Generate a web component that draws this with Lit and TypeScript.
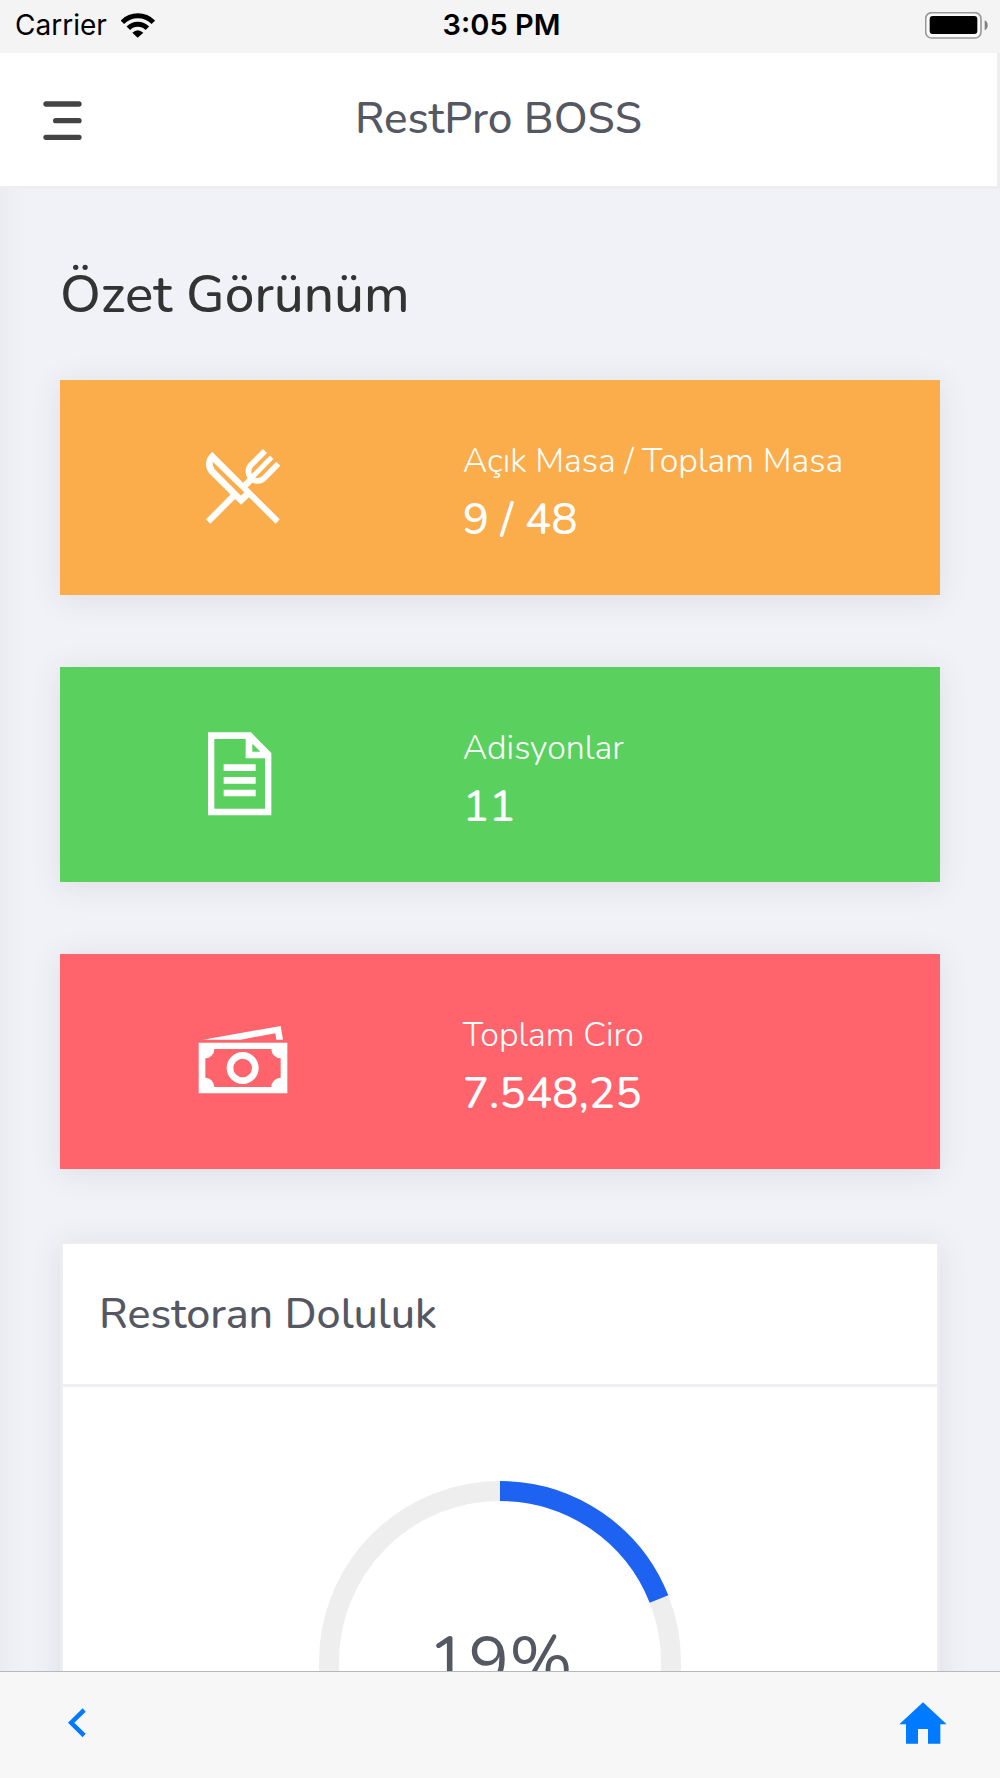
import { LitElement, html, css, svg } from "lit";
import { customElement, property } from "lit/decorators.js";

const cutleryIcon = svg`
  <svg viewBox="46 59 288 288" aria-hidden="true">
    <path fill="currentColor" fill-rule="evenodd" d="M98 95L300 297L288 310L208 231L184 253L90 160Q79 148 79 130Q80 108 98 95ZM99 124Q98 138 105 147L184 226L194 216Z"/>
    <path fill="currentColor" d="M79 297L154 221L167 235L92 310ZM190 188L212 165L226 179L203 202Z"/>
    <g fill="none" stroke="currentColor">
      <path stroke-width="17" d="M256 92L214 134Q203 146 208 163L214 175L227 181Q243 184 254 173L296 130"/>
      <path stroke-width="15" d="M276 111L220 168"/>
    </g>
  </svg>`;

const billIcon = svg`
  <svg viewBox="46 50 288 288" aria-hidden="true">
    <path fill="currentColor" fill-rule="evenodd" d="M85 66H214L275 128V315H85ZM104 86V295H256V144H198V86ZM218 100V124H242Z"/>
    <path fill="currentColor" d="M132 162H228V182H132ZM132 200H228V220H132ZM132 238H228V258H132Z"/>
  </svg>`;

const cashIcon = svg`
  <svg viewBox="46 40 288 288" aria-hidden="true">
    <path fill="currentColor" d="M70 117L303 76L310 117H290L287 98L183 117Z"/>
    <path fill="currentColor" fill-rule="evenodd" d="M57 126H323V278H57ZM104 145A28 28 0 0 1 77 173V231A28 28 0 0 1 104 259H275A28 28 0 0 1 303 231V173A28 28 0 0 1 275 145Z"/>
    <circle cx="189" cy="202" r="38" fill="none" stroke="currentColor" stroke-width="20"/>
  </svg>`;

@customElement("status-bar")
export class StatusBar extends LitElement {
  static styles = css`
    :host {
      display: grid;
      grid-template-columns: 1fr auto 1fr;
      align-items: center;
      height: 53px;
      padding: 0 12px 3px 15px;
      box-sizing: border-box;
      background: #f4f4f4;
      color: #000;
      font: 400 28px/50px Inter, "Liberation Sans", sans-serif;
    }
    .carrier { display: flex; align-items: center; gap: 14px; }
    .time { font-size: 29px; font-weight: 600; }
    .wifi { width: 34px; height: 25px; }
    .battery { width: 63px; height: 27px; justify-self: end; }
  `;
  render() {
    return html`
      <div class="carrier">
        <span>Carrier</span>
        <svg class="wifi" viewBox="363 35 102 75" role="img" aria-label="Wi-Fi">
          <g fill="none" stroke="currentColor" stroke-width="15">
            <path d="M367 63A65 65 0 0 1 460 63"/>
            <path d="M385 81A40 40 0 0 1 442 81"/>
          </g>
          <path fill="currentColor" d="M413 109L397 94Q413 79 430 94Z"/>
        </svg>
      </div>
      <span class="time">3:05 PM</span>
      <svg class="battery" viewBox="1276 33 189 81" role="img" aria-label="Battery full">
        <rect x="1278" y="35" width="166" height="76" rx="18" fill="#fafafa" stroke="#999" stroke-width="5"/>
        <rect x="1290" y="45" width="143" height="54" rx="9" fill="currentColor"/>
        <path fill="#808080" d="M1455 58Q1464 62 1464 73T1455 88Z"/>
      </svg>`;
  }
}

@customElement("stat-card")
export class StatCard extends LitElement {
  @property() label = "";
  @property() value = "";
  @property() tone = "orange";
  @property({ attribute: false }) icon: unknown;

  static styles = css`
    .card {
      display: grid;
      grid-template-columns: 5fr 7fr;
      align-items: center;
      min-height: 215px;
      color: #fff;
      box-shadow: 0 4px 30px rgba(60, 60, 80, 0.1);
    }
    .orange { background: #fbad4c; }
    .green { background: #5ad15f; }
    .red { background: #ff646d; }
    .icon { display: flex; justify-content: center; }
    .icon svg { width: 96px; height: 96px; }
    .text { padding: 10px 36px 0; }
    .label, .value { margin: 0; }
    .label { font-size: 34px; line-height: 54px; font-weight: 300; }
    .value { font-size: 44px; line-height: 64px; font-weight: 500; }
  `;
  render() {
    return html`
      <section class="card ${this.tone}">
        <div class="icon">${this.icon}</div>
        <div class="text">
          <p class="label">${this.label}</p>
          <p class="value">${this.value}</p>
        </div>
      </section>`;
  }
}

@customElement("progress-ring")
export class ProgressRing extends LitElement {
  @property({ type: Number }) percent = 0;

  static styles = css`
    :host { display: block; }
    .ring { display: block; width: 362px; height: 362px; margin: 0 auto; }
    .track { fill: none; stroke: #eee; stroke-width: 20; }
    .bar { fill: none; stroke: #1e62f1; stroke-width: 20; }
    .number { fill: #555862; font-size: 68px; text-anchor: middle; }
  `;
  render() {
    return html`
      <svg class="ring" viewBox="0 0 362 362" role="img" aria-label="${this.percent}%">
        <circle class="track" cx="181" cy="181" r="171"/>
        <circle class="bar" cx="181" cy="181" r="171" pathLength="100"
          stroke-dasharray="${this.percent} 100" transform="rotate(-90 181 181)"/>
        <text class="number" x="181" y="203">${this.percent}%</text>
      </svg>`;
  }
}

@customElement("app-root")
export class AppRoot extends LitElement {
  static styles = css`
    :host {
      display: flex;
      flex-direction: column;
      height: 100vh;
      background: #f1f2f7;
      color: #555862;
      font-family: Nunito, Lato, "Open Sans", sans-serif;
    }
    .header {
      display: grid;
      grid-template-columns: 1fr auto 1fr;
      align-items: center;
      height: 136px;
      flex: none;
      box-sizing: border-box;
      padding: 0 35px;
      background: #fff;
      border: solid #eee;
      border-width: 0 3px 3px 0;
    }
    .title { margin: 0; font-size: 44px; line-height: 60px; font-weight: 500; padding-bottom: 2px; }
    button, .link {
      display: flex;
      padding: 8px;
      border: 0;
      background: none;
      color: inherit;
      cursor: pointer;
    }
    .menu { justify-self: start; padding-top: 11px; color: #444; }
    .menu svg { width: 39px; height: 40px; }
    .content {
      flex: 1;
      min-height: 0;
      overflow-y: auto;
      scrollbar-width: none;
      padding: 70px 60px 0;
      background: linear-gradient(90deg, #ebecf2, #f1f2f7 26px);
    }
    .heading { margin: 0 0 49px; font-size: 53px; line-height: 72px; font-weight: 500; color: #333; }
    .cards { display: grid; gap: 72px; }
    .panel {
      background: #fff;
      border: 3px solid #ededf0;
      box-shadow: 0 4px 30px rgba(60, 60, 80, 0.1);
    }
    .panel-title {
      margin: 0;
      padding: 38px 36px;
      border-bottom: 3px solid #eeeef3;
      font-size: 43px;
      line-height: 64px;
      font-weight: 500;
    }
    .panel-body { padding: 94px 36px; }
    .toolbar {
      display: flex;
      align-items: center;
      justify-content: space-between;
      flex: none;
      height: 107px;
      box-sizing: border-box;
      padding: 0 45px 4px 60px;
      background: #f7f7f7;
      border-top: 1px solid #b8b8b8;
      color: #007aff;
    }
    .back svg { width: 18px; height: 30px; }
    .home svg { width: 48px; height: 42px; }
  `;
  render() {
    return html`
      <status-bar></status-bar>
      <header class="header">
        <button class="menu" type="button" aria-label="Menü">
          <svg viewBox="130 303 117 120" aria-hidden="true">
            <path fill="none" stroke="currentColor" stroke-width="16" stroke-linecap="round" d="M139 312H238M168 362H238M139 412H238"/>
          </svg>
        </button>
        <h1 class="title">RestPro BOSS</h1>
      </header>
      <main class="content">
        <h2 class="heading">Özet Görünüm</h2>
        <div class="cards">
          <stat-card tone="orange" label="Açık Masa / Toplam Masa" value="9 / 48" .icon=${cutleryIcon}></stat-card>
          <stat-card tone="green" label="Adisyonlar" value="11" .icon=${billIcon}></stat-card>
          <stat-card tone="red" label="Toplam Ciro" value="7.548,25" .icon=${cashIcon}></stat-card>
          <section class="panel">
            <h3 class="panel-title">Restoran Doluluk</h3>
            <div class="panel-body"><progress-ring percent="19"></progress-ring></div>
          </section>
        </div>
      </main>
      <nav class="toolbar">
        <button class="back" type="button" aria-label="Geri">
          <svg viewBox="204 327 54 90" aria-hidden="true">
            <path fill="currentColor" d="M204 371L248 328L257 338L223 371L257 404L248 415Z"/>
          </svg>
        </button>
        <a class="link home" href="#" aria-label="Ana sayfa">
          <svg viewBox="596 305 144 126" aria-hidden="true">
            <path fill="currentColor" d="M668 306L739 372H720V430H683V386H653V430H617V372H597Z"/>
          </svg>
        </a>
      </nav>`;
  }
}
